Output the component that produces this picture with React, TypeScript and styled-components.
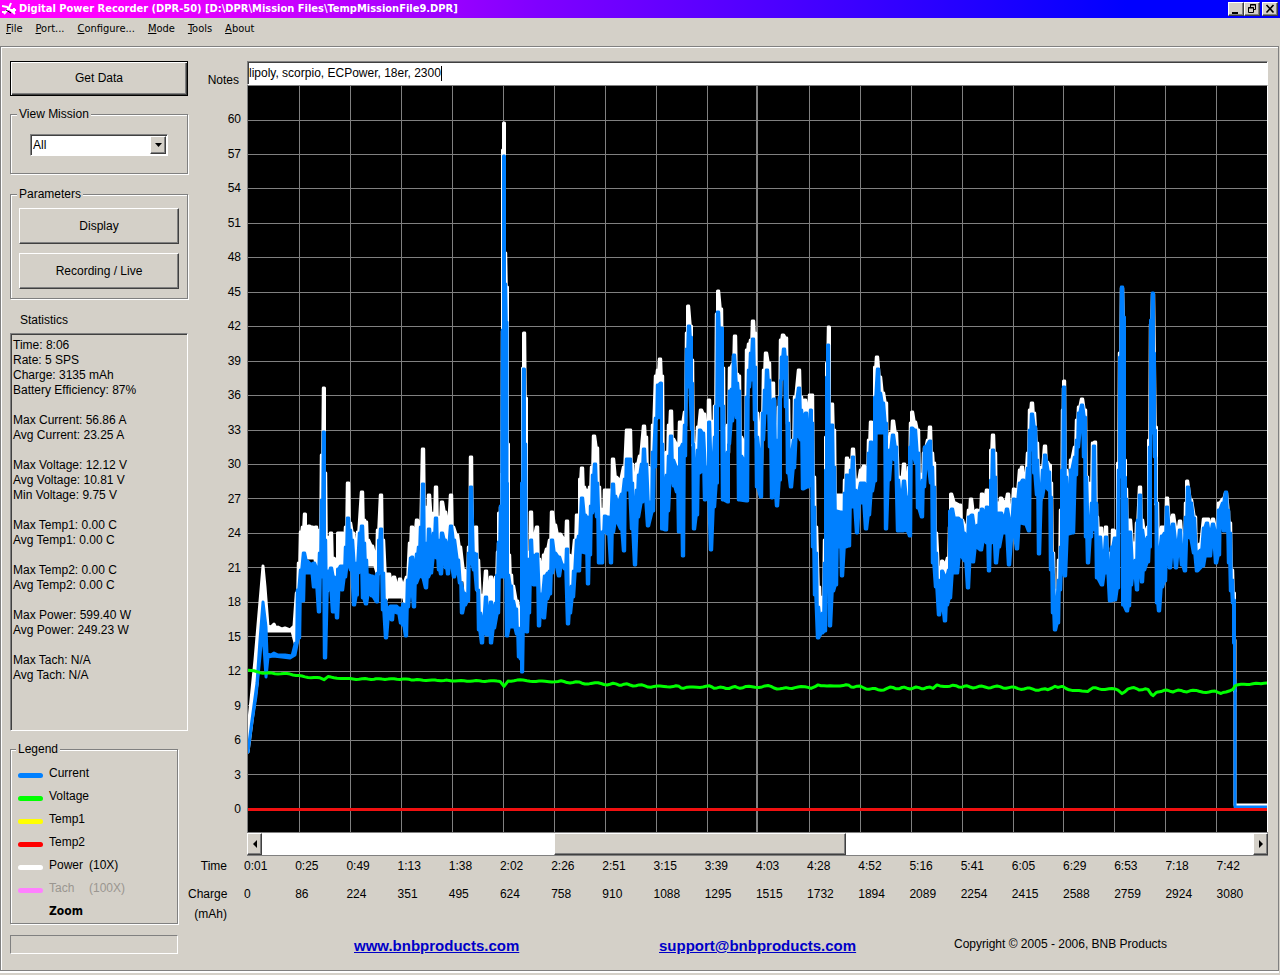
import React from 'react';
import styled, { createGlobalStyle, css } from 'styled-components';

const FACE = '#d4d0c8';
const SHADOW = '#808080';
const DARK = '#404040';
const LIGHT = '#ffffff';
const BLUE = '#0080ff';

const GlobalStyle = createGlobalStyle`
  * { box-sizing: border-box; }
  body {
    margin: 0;
    background: ${FACE};
    color: #000;
    font-family: "Liberation Sans", Arial, sans-serif;
    font-size: 12px;
    line-height: 15px;
  }
  button, input, select { font: inherit; color: inherit; }
`;

const raised = css`
  border: 1px solid;
  border-color: ${LIGHT} ${DARK} ${DARK} ${LIGHT};
  box-shadow: inset -1px -1px 0 ${SHADOW};
  background: ${FACE};
`;

const sunken = css`
  border: 1px solid;
  border-color: ${SHADOW} ${LIGHT} ${LIGHT} ${SHADOW};
  box-shadow: inset 1px 1px 0 ${DARK};
`;

const Window = styled.div`
  display: flex;
  flex-direction: column;
  min-height: 100vh;
  min-width: 900px;
`;

const TitleBar = styled.header`
  display: flex;
  align-items: center;
  height: 18px;
  padding: 0 2px;
  color: #fff;
  background: linear-gradient(90deg, #ff00ff 0%, #ff00ff 8%, #8000ff 42%, #0000ff 88%);
`;

const Title = styled.h1`
  flex: 1;
  margin: 0 0 0 2px;
  font: bold 11px/18px "DejaVu Sans Condensed", "DejaVu Sans", sans-serif;
  white-space: nowrap;
`;

const WindowButton = styled.button<{ $apart?: boolean }>`
  ${raised}
  display: flex;
  width: 16px;
  height: 14px;
  padding: 0;
  margin-left: ${(p) => (p.$apart ? 2 : 0)}px;
`;

const MenuBar = styled.nav`
  display: flex;
  gap: 13px;
  height: 28px;
  padding: 3px 6px;
`;

const MenuItem = styled.button`
  padding: 0;
  border: 0;
  background: none;
  height: 16px;
  font: 11px/16px "DejaVu Sans Condensed", "DejaVu Sans", sans-serif;
  &::first-letter { text-decoration: underline; }
`;

const Panel = styled.main`
  flex: 1;
  display: flex;
  margin: 0 1px 4px 0;
  padding: 14px 10px 0 8px;
  border: 1px solid ${SHADOW};
  box-shadow: inset 1px 1px 0 ${LIGHT}, 0 2px 0 ${LIGHT};
`;

const Sidebar = styled.aside`
  flex: none;
  display: flex;
  flex-direction: column;
  width: 178px;
  margin-left: 1px;
  padding-bottom: 16px;
`;

const PushButton = styled.button`
  ${raised}
  display: block;
  width: 100%;
  height: 36px;
  padding: 0;
`;

const DefaultButton = styled(PushButton)`
  height: 35px;
  border-color: #000;
  box-shadow: inset 1px 1px 0 ${LIGHT}, inset -1px -1px 0 ${DARK}, inset -2px -2px 0 ${SHADOW};
`;

const Group = styled.fieldset`
  min-width: 0;
  margin: 0;
  border: 1px solid ${SHADOW};
  box-shadow: 1px 1px 0 ${LIGHT}, inset 1px 1px 0 ${LIGHT};
`;

const GroupTitle = styled.legend`
  margin-left: -2px;
  padding: 0 2px;
  background: ${FACE};
`;

const MissionGroup = styled(Group)`
  margin-top: 11px;
  padding: 12px 8px 17px;
`;

const ParamGroup = styled(Group)`
  margin-top: 13px;
  padding: 6px 8px 9px;
`;

const ButtonStack = styled.div`
  display: flex;
  flex-direction: column;
  gap: 9px;
`;

const Combo = styled.div`
  ${sunken}
  display: flex;
  width: 138px;
  height: 22px;
  margin-left: 11px;
  padding: 1px;
  background: #fff;
`;

const ComboSelect = styled.select`
  flex: 1;
  appearance: none;
  border: 0;
  padding: 0 0 0 1px;
  background: transparent;
  outline: none;
`;

const ComboArrow = styled.span`
  ${raised}
  display: flex;
  align-items: center;
  justify-content: center;
  width: 16px;
`;

const StatsTitle = styled.h2`
  margin: 14px 0 5px 10px;
  font-size: 12px;
  font-weight: normal;
`;

const Stats = styled.section`
  ${sunken}
  flex: 1;
  padding: 4px 2px;
`;

const StatBlock = styled.p`
  margin: 0 0 15px;
`;

const StatLine = styled.span`
  display: block;
`;

const LegendGroup = styled(Group)`
  width: 168px;
  margin-top: 11px;
  padding: 5px 7px 0;
`;

const LegendList = styled.ul`
  margin: 0;
  padding: 0;
  list-style: none;
`;

const LegendRow = styled.li<{ $muted?: boolean }>`
  display: flex;
  align-items: center;
  height: 23px;
  color: ${(p) => (p.$muted ? '#9a9690' : '#000')};
`;

const Swatch = styled.span<{ $color: string }>`
  width: 25px;
  height: 5px;
  margin: 4px 6px 0 0;
  border-radius: 3px;
  background: ${(p) => p.$color};
`;

const LegendName = styled.span`
  width: 40px;
`;

const ZoomLabel = styled.strong`
  margin-left: 31px;
  font: bold 12px/15px "DejaVu Sans Condensed", "DejaVu Sans", sans-serif;
`;

const StatusBox = styled.output`
  flex: none;
  width: 168px;
  height: 19px;
  margin-top: 11px;
  border: 1px solid;
  border-color: ${SHADOW} ${LIGHT} ${LIGHT} ${SHADOW};
`;

const Content = styled.section`
  flex: 1;
  display: flex;
  flex-direction: column;
  min-width: 0;
`;

const NotesRow = styled.div`
  display: flex;
  height: 24px;
`;

const NotesLabel = styled.label`
  width: 59px;
  padding: 12px 8px 0 0;
  text-align: right;
`;

const NotesBox = styled.div`
  ${sunken}
  flex: 1;
  display: flex;
  align-items: center;
  padding: 0 1px;
  background: #fff;
`;

const NotesInput = styled.input`
  field-sizing: content;
  padding: 0;
  border: 0;
  outline: none;
  background: transparent;
`;

const Caret = styled.span`
  width: 1px;
  height: 15px;
  background: #000;
`;

const ChartRow = styled.div`
  flex: 1;
  display: flex;
  min-height: 500px;
`;

const YAxis = styled.ol`
  display: flex;
  flex-direction: column;
  justify-content: space-between;
  width: 59px;
  margin: 0;
  padding: 27px 6px 15px 0;
  list-style: none;
  text-align: right;
`;

const ChartFrame = styled.div`
  flex: 1;
  display: flex;
  min-width: 0;
  border: 1px solid;
  border-color: ${SHADOW} ${LIGHT} ${SHADOW} ${SHADOW};
  border-bottom: 0;
  background: #000;
`;

const Plot = styled.svg`
  display: block;
  flex: 1;
  width: 100%;
  height: auto;
  min-width: 0;
`;

const ScrollBar = styled.div`
  display: flex;
  height: 24px;
  margin-left: 59px;
  border-top: 1px solid ${SHADOW};
  border-bottom: 1px solid ${SHADOW};
  background: #fff;
`;

const ScrollButton = styled.button`
  ${raised}
  display: flex;
  align-items: center;
  justify-content: center;
  width: 15px;
  padding: 0;
`;

const ScrollTrack = styled.span<{ $share: number }>`
  flex: ${(p) => p.$share};
`;

const ScrollThumb = styled.span`
  ${raised}
  flex: 291;
`;

const AxisTable = styled.table`
  width: 100%;
  table-layout: fixed;
  border-collapse: collapse;
  line-height: 20px;
`;

const AxisHead = styled.th<{ $gap?: boolean }>`
  width: 56px;
  padding: ${(p) => (p.$gap ? 8 : 0)}px 17px 0 0;
  font-weight: normal;
  text-align: right;
`;

const AxisCell = styled.td<{ $gap?: boolean }>`
  padding: ${(p) => (p.$gap ? 8 : 0)}px 0 0;
  vertical-align: top;
`;

const Footer = styled.footer`
  display: grid;
  grid-template-columns: 305fr 295fr 314fr;
  height: 46px;
  padding: 12px 0 0 166px;
  white-space: nowrap;
`;

const FooterLink = styled.a`
  justify-self: start;
  color: #0000c8;
  font-size: 15px;
  font-weight: bold;
  line-height: 20px;
`;

const Copyright = styled.span`
  line-height: 17px;
`;

type Point = [number, number];

const parse = (text: string): Point[] =>
  text
    .trim()
    .split(/\s+/)
    .map((pair) => pair.split(',').map(Number) as Point);

const POWER_TOP = parse(`
248,730 255,660 261,590 263,566 265,587 268,626 271,627 274,624 276,628 278,627 282,629 285,628 290,630 294,626 297,593 299,563 301,532 303,527
305,514 306,527 309,526 312,527 314,533 316,527 318,537 320,530 322,455 324,388 325,473 327,537 329,547 331,533 333,558
337,560 338,533 342,533 344,542 346,527 348,483 350,523 353,533 356,553 358,532 362,492 364,520 366,522 368,540 372,546
376,557 378,530 381,495 383,540 386,574 389,574 392,585 394,577 398,587 400,579 403,585 407,577 410,543 412,527 414,540
417,520 420,527 423,449 425,507 427,520 429,495 432,520 434,513 436,487 438,517 440,520 442,502 445,512 448,525 451,495
453,527 457,535 460,547 464,570 467,575 469,547 471,457 473,540 476,527 478,560 481,597 483,595 486,571 488,595 491,577
493,585 496,577 498,552 499,513 501,513 502,473 503,150 504,123 505,253 507,287 508,444 509,555 511,575 513,586 517,601
521,620 522,578 523,368 524,333 526,398 527,552 529,563 531,512 533,540 537,527 539,559 542,571 544,555 547,549 550,540
552,512 555,525 558,534 560,534 565,540 567,521 569,555 572,557 575,540 577,515 579,515 580,479 582,468 584,487 586,490
588,517 590,487 592,467 594,436 597,448 599,487 601,509 603,517 605,490 609,490 611,502 613,459 616,477 620,480 624,467
627,430 630,430 632,464 635,494 637,464 640,456 644,426 646,437 648,467 651,479 653,425 656,376 658,370 660,359 662,376
664,464 667,452 669,425 671,411 673,439 678,446 680,422 682,423 685,412 687,333 688,306 691,326 692,360 694,444 695,464
698,427 701,410 704,414 707,444 709,400 711,421 713,452 715,406 717,314 718,291 721,309 723,368 725,450 728,425 730,368
733,364 735,336 737,374 739,376 741,437 745,444 747,350 749,344 751,340 753,321 755,333 757,413 760,447 762,413 764,370
766,353 769,363 771,397 773,383 775,427 777,447 779,407 781,340 783,335 786,338 788,400 790,443 793,440 795,397 799,370
801,397 803,404 805,400 808,413 810,395 812,395 814,477 816,527 819,587 821,608 823,597 825,540 826,437 827,363 829,327
830,413 832,404 834,430 836,495 841,495 843,520 845,480 847,458 849,473 851,460 853,449 856,480 858,480 861,470 864,466
867,473 869,440 871,422 874,440 875,367 877,357 880,377 883,393 886,403 888,457 891,433 893,421 896,433 899,477 901,483
904,464 908,490 909,467 911,423 912,412 915,422 918,430 920,474 922,477 924,453 928,440 930,427 932,453 934,463 936,533
939,567 941,577 942,561 945,564 948,558 950,527 951,494 955,503 960,505 962,520 966,529 969,510 971,499 974,513 977,510
980,511 982,494 984,500 987,490 990,503 991,450 993,435 995,453 997,510 999,503 1001,498 1005,503 1008,494 1011,517
1014,489 1017,490 1020,470 1022,467 1025,483 1028,453 1030,410 1032,403 1034,413 1037,443 1040,493 1042,467 1045,446
1047,462 1050,465 1051,483 1053,553 1055,590 1057,593 1059,560 1061,510 1063,410 1064,381 1066,470 1069,490 1071,460
1075,447 1077,420 1079,407 1082,399 1085,410 1087,477 1089,523 1091,483 1093,443 1095,442 1097,517 1099,529 1101,528
1103,553 1106,527 1108,553 1111,560 1113,530 1117,532 1118,463 1120,353 1122,289 1124,320 1125,460 1126,489 1128,530
1130,520 1133,543 1135,543 1137,523 1140,487 1142,520 1145,533 1148,527 1149,440 1151,324 1153,294 1156,427 1157,503
1159,543 1162,527 1165,527 1167,498 1170,523 1173,515 1177,532 1180,521 1184,557 1186,503 1187,481 1191,500 1195,517
1197,548 1200,544 1204,519 1208,519 1210,527 1213,519 1217,533 1219,503 1223,499 1226,493 1230,523 1232,570 1234,593
1235,640 1235,690`);

const CURRENT_TOP = parse(`
248,751 252,720 257,683 260,640 263,602 266,627 267,654 271,655 274,653 278,655 285,655 292,656 296,643 298,590 301,570 304,553 307,561 311,564
314,563 318,570 320,553 322,500 324,432 325,540 327,590 329,571 331,568 334,577 337,587 338,569 341,566 344,566 346,547 348,518
350,530 352,540 355,565 357,563 360,533 362,526 364,543 366,560 368,575 372,576 374,578 378,573 379,540 381,529 383,573
385,600 388,609 391,606 396,606 399,608 402,608 403,604 406,605 408,580 411,558 412,557 415,567 417,554 419,547 421,527
423,484 425,543 427,547 429,529 432,548 434,533 436,518 438,540 440,543 442,533 445,540 448,547 451,526 454,540 458,560
461,583 464,593 467,597 469,553 471,487 474,553 476,554 478,590 480,613 483,623 486,597 488,617 491,602 493,610 496,603
497,575 499,542 501,506 503,330 504,156 505,284 507,322 507,483 508,575 511,586 513,601 516,609 518,628 521,636 522,483
524,369 525,444 527,559 528,594 530,559 531,540 533,555 535,565 537,554 540,594 542,594 545,576 548,573 550,571 552,540
555,553 559,557 563,565 565,567 567,549 569,597 572,586 574,571 577,540 579,536 582,498 585,515 587,517 589,548 591,506
593,475 595,464 597,483 600,532 603,532 605,516 608,517 610,525 613,484 615,496 618,502 622,494 625,479 627,459 630,459
632,483 634,517 637,490 639,475 642,464 644,449 646,464 649,502 651,502 653,452 656,418 658,385 661,383 662,444 664,494
667,475 669,456 671,436 673,460 677,467 679,483 680,448 683,444 685,425 687,349 689,326 691,337 692,383 693,444 695,483
698,450 700,430 703,433 706,467 708,467 709,422 712,473 715,437 716,406 718,312 720,328 722,328 723,406 725,467 728,452
730,391 732,389 734,355 737,383 739,391 741,456 745,461 747,397 749,370 751,353 753,339 755,367 757,437 761,463 763,413
765,390 767,370 769,380 771,407 774,399 776,440 778,453 780,397 782,357 784,349 786,357 788,423 790,460 794,440 796,400
799,388 801,410 803,417 806,413 808,440 811,410 812,423 814,507 816,553 818,607 821,622 823,613 825,563 826,470 827,377
828,345 830,440 832,425 834,467 836,511 841,512 843,537 845,493 847,475 849,493 851,470 853,457 855,490 858,492 861,483
864,483 867,490 869,453 871,442 874,463 875,397 878,369 880,393 883,403 886,423 887,477 890,450 893,435 896,447 898,480
901,498 904,481 907,497 909,510 910,447 912,428 915,430 918,453 920,493 923,480 925,447 930,441 932,467 934,487 936,553
938,580 941,597 942,571 946,577 949,570 950,511 952,509 955,518 958,518 961,520 964,533 967,540 969,517 972,515 975,527
978,525 980,513 982,509 985,513 987,507 990,513 991,480 993,450 995,477 997,520 999,513 1001,513 1004,518 1007,509
1011,525 1014,499 1017,500 1020,483 1023,480 1025,497 1028,468 1030,430 1032,414 1035,427 1037,460 1040,500 1043,470
1045,455 1049,472 1051,497 1052,553 1055,597 1056,605 1059,580 1061,547 1062,470 1064,387 1066,477 1069,507 1071,470
1075,457 1077,440 1079,413 1082,405 1085,417 1086,477 1089,537 1092,503 1094,446 1096,503 1098,543 1100,537 1103,563
1106,537 1110,580 1112,547 1115,538 1117,542 1119,470 1120,357 1122,287 1124,317 1125,477 1126,499 1128,537 1130,532
1133,563 1136,560 1138,520 1140,495 1142,530 1145,542 1148,537 1150,447 1151,320 1153,293 1154,353 1155,430 1156,503
1158,560 1162,536 1165,533 1167,507 1170,533 1173,524 1177,547 1180,530 1183,563 1186,517 1188,487 1191,503 1194,518
1197,553 1201,550 1204,528 1207,523 1210,533 1213,524 1217,537 1219,510 1223,503 1226,492 1228,510 1230,533 1232,580
1234,600 1235,690`);

const CURRENT_BOTTOM = parse(`
248,752 252,722 256,696 260,656 262,633 264,647 266,677 268,657 273,656 282,657 290,658 295,655 299,638 301,598 303,601 305,573
309,573 311,570 314,587 316,586 319,612 321,577 323,570 325,658 328,590 330,587 333,612 335,605 337,618 340,580 342,590
345,577 348,563 351,570 354,605 357,595 358,573 361,570 363,598 366,604 369,593 372,596 377,602 379,573 381,573 383,610
386,638 389,617 392,620 394,612 398,613 401,623 403,625 406,636 408,607 411,587 414,607 416,583 420,576 422,577 426,588
428,577 431,573 434,557 437,558 439,570 441,574 444,547 446,568 448,574 450,560 454,577 457,570 460,583 462,613 465,605
468,601 470,557 474,570 477,590 479,630 482,643 484,630 487,635 489,613 491,643 494,628 498,613 500,577 503,577 505,577
507,636 510,627 514,627 517,634 519,657 521,659 522,672 524,631 527,632 529,613 531,582 534,585 537,585 539,626 541,613
544,618 547,599 550,594 552,573 555,563 559,576 562,565 565,569 568,624 570,613 573,597 576,571 579,571 581,552 586,553
588,584 590,555 592,513 595,506 597,517 599,563 602,563 604,531 608,534 611,563 613,532 616,521 621,529 624,551 626,490
629,490 632,529 635,565 638,517 642,502 645,500 648,526 653,511 655,467 657,418 659,402 661,418 662,529 666,530 668,511
671,475 674,486 677,492 679,532 681,502 683,556 685,456 687,387 689,381 692,429 694,529 697,515 699,473 703,471 705,500
708,496 711,550 714,507 717,483 718,368 720,345 721,406 723,500 728,502 729,444 732,421 735,404 737,418 739,500 747,501
749,387 751,380 753,373 755,420 757,487 761,497 763,440 766,407 768,413 770,447 772,498 774,480 777,506 780,480 781,380
784,370 786,407 788,473 791,487 794,468 797,433 801,440 803,489 808,487 811,480 813,547 815,595 818,638 822,633 825,631
827,547 828,563 830,626 833,591 836,585 838,543 840,547 842,576 845,547 849,546 851,507 854,507 857,533 860,503 863,503
866,529 869,515 872,491 875,481 877,423 879,433 884,433 886,529 889,480 892,457 895,460 898,531 903,531 905,503 907,531
910,536 912,453 916,463 918,508 922,517 924,487 927,460 931,483 933,563 936,587 939,615 942,605 945,621 947,605 950,598
953,573 957,573 960,555 965,561 968,588 971,553 973,562 976,547 981,550 984,540 987,543 989,571 991,543 993,527 996,563
999,547 1003,533 1006,533 1009,565 1013,530 1017,549 1020,523 1025,524 1029,531 1031,450 1033,440 1034,473 1037,495
1039,554 1042,497 1045,487 1049,490 1051,570 1053,613 1055,630 1058,623 1060,590 1063,543 1065,576 1068,534 1073,533
1076,475 1078,447 1082,417 1084,457 1086,537 1088,563 1091,537 1093,510 1095,530 1097,578 1102,585 1105,573 1107,570
1110,601 1115,600 1118,588 1120,470 1122,477 1123,605 1127,611 1129,606 1131,585 1134,570 1137,590 1139,563 1142,582
1144,570 1148,562 1150,547 1151,433 1153,430 1155,457 1157,603 1159,611 1162,587 1165,581 1167,553 1170,568 1173,547
1176,568 1179,547 1182,565 1185,571 1188,517 1190,538 1194,553 1197,571 1203,566 1206,556 1210,556 1213,537 1216,563
1219,555 1221,513 1224,531 1227,531 1229,563 1231,591 1233,603 1234,643 1235,690`);

const VOLTAGE = parse(`
248,670 263,673 290,674 305,677 320,678 324,680 328,677 350,679 400,679 420,680 470,681 500,681 504,686 508,681 523,680
527,681 570,682 582,683 607,684 633,685 657,687 670,686 690,688 703,686 720,688 749,687 765,686 783,689 795,687 811,688
818,684 827,687 840,685 860,687 878,690 890,688 913,688 933,688 937,685 950,686 973,687 1000,687 1030,689 1048,690
1055,686 1066,688 1082,692 1096,688 1118,690 1122,694 1128,688 1148,690 1153,696 1158,691 1190,691 1215,692 1226,693
1233,690 1235,685 1250,684 1267,683`);

// Stretches where the power trace rides clear above the current trace.
const CLEAR: [number, number, number][] = [
  [267, 294, 631],
  [307, 317, 558],
  [368, 376, 565],
  [386, 404, 597],
  [461, 466, 580],
];

const POWER_BOTTOM: Point[] = CURRENT_TOP.map(([x, y]) => {
  const gap = CLEAR.find(([from, to]) => x >= from && x <= to);
  return [x, gap ? gap[2] : y + 1];
});

// After the opening ramp, samples are held briefly so the band edges climb in steep steps.
const hold = (points: Point[]): Point[] =>
  points.flatMap(([x, y], i): Point[] => {
    if (x < 296) return [[x, y]];
    const prev = points[i - 1] ?? [x, y];
    const next = points[i + 1] ?? [x, y];
    const left = x - Math.min(0.7, (x - prev[0]) / 2);
    const right = x + Math.min(0.7, (next[0] - x) / 2);
    return [[left, y], [right, y]];
  });

const toPath = (points: Point[]) => points.map(([x, y]) => `${x},${y}`).join(' ');
const toBand = (top: Point[], bottom: Point[]) =>
  `${toPath(hold(top))} ${toPath(hold(bottom).reverse())}`;

const ripple = (points: Point[]): Point[] =>
  points.slice(1).flatMap(([x1, y1], i) => {
    const [x0, y0] = points[i];
    const steps = Math.max(1, Math.round((x1 - x0) / 3));
    return Array.from({ length: steps }, (_, k): Point => {
      const x = x0 + ((x1 - x0) * k) / steps;
      const y = y0 + ((y1 - y0) * k) / steps;
      const swing = x < 560 || x > 1236 ? 0.4 : 1;
      return [Math.round(x), Math.round((y + swing * Math.sin(x * 1.7)) * 10) / 10];
    }).concat(i === points.length - 2 ? [[x1, y1]] : []);
  });

const Y_LABELS = Array.from({ length: 21 }, (_, i) => 60 - i * 3);
const GRID_Y = Y_LABELS.map((v) => Math.round(808.4 - v * 11.48) + 0.5);
const GRID_X = Array.from({ length: 19 }, (_, i) =>
  i === 9 ? 757 : Math.floor(299 + i * 50.98 + 0.3) + 0.5,
);

const TIMES = ['0:01', '0:25', '0:49', '1:13', '1:38', '2:02', '2:26', '2:51', '3:15', '3:39', '4:03', '4:28', '4:52', '5:16', '5:41', '6:05', '6:29', '6:53', '7:18', '7:42'];
const CHARGES = [0, 86, 224, 351, 495, 624, 758, 910, 1088, 1295, 1515, 1732, 1894, 2089, 2254, 2415, 2588, 2759, 2924, 3080];

const STATS = [
  ['Time: 8:06', 'Rate: 5 SPS', 'Charge: 3135 mAh', 'Battery Efficiency: 87%'],
  ['Max Current: 56.86 A', 'Avg Current: 23.25 A'],
  ['Max Voltage: 12.12 V', 'Avg Voltage: 10.81 V', 'Min Voltage: 9.75 V'],
  ['Max Temp1: 0.00 C', 'Avg Temp1: 0.00 C'],
  ['Max Temp2: 0.00 C', 'Avg Temp2: 0.00 C'],
  ['Max Power: 599.40 W', 'Avg Power: 249.23 W'],
  ['Max Tach: N/A', 'Avg Tach: N/A'],
];

const SERIES = [
  { name: 'Current', color: BLUE },
  { name: 'Voltage', color: '#00ff00' },
  { name: 'Temp1', color: '#ffff00' },
  { name: 'Temp2', color: '#ff0000' },
  { name: 'Power', scale: '(10X)', color: '#ffffff' },
  { name: 'Tach', scale: '(100X)', color: '#ff80ff', muted: true },
];

const MENUS = ['File', 'Port...', 'Configure...', 'Mode', 'Tools', 'About'];

function Chart() {
  return (
    <Plot viewBox="248 86 1019 746" preserveAspectRatio="none" role="img" aria-label="Mission recording">
      <g stroke="#808080" strokeWidth="1">
        {GRID_Y.map((y) => <line key={y} x1="248" x2="1267" y1={y} y2={y} />)}
        {GRID_X.map((x, i) => <line key={x} x1={x} x2={x} y1="86" y2="832" strokeWidth={i === 9 ? 2 : 1} />)}
      </g>
      <g strokeWidth="3" strokeLinejoin="round" strokeLinecap="round">
        <polygon points={toBand(POWER_TOP, POWER_BOTTOM)} fill="#fff" stroke="#fff" />
        <polyline points="1235,690 1235,805 1267,805" fill="none" stroke="#fff" />
        <polygon points={toBand(CURRENT_TOP, CURRENT_BOTTOM)} fill={BLUE} stroke={BLUE} />
        <polyline points="1235,680 1235,807 1267,807" fill="none" stroke={BLUE} />
        <polyline points={toPath(ripple(VOLTAGE))} fill="none" stroke="#00ff00" />
      </g>
      <line x1="248" x2="1267" y1="809.5" y2="809.5" stroke="#f01010" strokeWidth="3" />
    </Plot>
  );
}

export default function App() {
  return (
    <Window>
      <GlobalStyle />
      <TitleBar>
        <svg width="15" height="14" viewBox="0 0 15 14" fill="none" stroke="#fff" strokeWidth="2" aria-hidden="true">
          <path d="M0 4 L5 5 L13 12 M9 1 L7 6 L2 12 M0 10 H5 M9 8 L14 8 M12 6 V12" />
          <path d="M4 8 L9 11" stroke="#000" strokeWidth="1" />
        </svg>
        <Title>Digital Power Recorder (DPR-50) [D:\DPR\Mission Files\TempMissionFile9.DPR]</Title>
        <WindowButton aria-label="Minimize">
          <svg width="14" height="12" viewBox="0 0 14 12"><path d="M3 9h6v2H3z" /></svg>
        </WindowButton>
        <WindowButton aria-label="Restore">
          <svg width="14" height="12" viewBox="0 0 14 12" fill="none" stroke="#000">
            <path d="M5.500 4V1.500h5v5H9M5 2h6M3.500 4.500h5v5h-5zM3 5h6" />
          </svg>
        </WindowButton>
        <WindowButton aria-label="Close" $apart>
          <svg width="14" height="12" viewBox="0 0 14 12"><path d="M3.500 2l7 7.500M10.500 2l-7 7.500" stroke="#000" strokeWidth="1.600" /></svg>
        </WindowButton>
      </TitleBar>
      <MenuBar>
        {MENUS.map((name) => <MenuItem key={name}>{name}</MenuItem>)}
      </MenuBar>
      <Panel>
        <Sidebar>
          <DefaultButton>Get Data</DefaultButton>
          <MissionGroup>
            <GroupTitle>View Mission</GroupTitle>
            <Combo>
              <ComboSelect aria-label="View Mission" defaultValue="All"><option>All</option></ComboSelect>
              <ComboArrow aria-hidden="true">
                <svg width="7" height="4" viewBox="0 0 7 4"><path d="M0 0h7L3.500 4z" /></svg>
              </ComboArrow>
            </Combo>
          </MissionGroup>
          <ParamGroup>
            <GroupTitle>Parameters</GroupTitle>
            <ButtonStack>
              <PushButton>Display</PushButton>
              <PushButton>Recording / Live</PushButton>
            </ButtonStack>
          </ParamGroup>
          <StatsTitle>Statistics</StatsTitle>
          <Stats>
            {STATS.map((block) => (
              <StatBlock key={block[0]}>
                {block.map((line) => <StatLine key={line}>{line}</StatLine>)}
              </StatBlock>
            ))}
          </Stats>
          <LegendGroup>
            <GroupTitle>Legend</GroupTitle>
            <LegendList>
              {SERIES.map((s) => (
                <LegendRow key={s.name} $muted={s.muted}>
                  <Swatch $color={s.color} />
                  <LegendName>{s.name}</LegendName>
                  {s.scale}
                </LegendRow>
              ))}
              <LegendRow><ZoomLabel>Zoom</ZoomLabel></LegendRow>
            </LegendList>
          </LegendGroup>
          <StatusBox />
        </Sidebar>
        <Content>
          <NotesRow>
            <NotesLabel htmlFor="notes">Notes</NotesLabel>
            <NotesBox>
              <NotesInput id="notes" defaultValue="lipoly, scorpio, ECPower, 18er, 2300" />
              <Caret />
            </NotesBox>
          </NotesRow>
          <ChartRow>
            <YAxis>{Y_LABELS.map((v) => <li key={v}>{v}</li>)}</YAxis>
            <ChartFrame><Chart /></ChartFrame>
          </ChartRow>
          <ScrollBar>
            <ScrollButton aria-label="Scroll left">
              <svg width="4" height="8" viewBox="0 0 4 8"><path d="M4 0v8L0 4z" /></svg>
            </ScrollButton>
            <ScrollTrack $share={292} />
            <ScrollThumb />
            <ScrollTrack $share={407} />
            <ScrollButton aria-label="Scroll right">
              <svg width="4" height="8" viewBox="0 0 4 8"><path d="M0 0v8l4-4z" /></svg>
            </ScrollButton>
          </ScrollBar>
          <AxisTable>
            <tbody>
              <tr>
                <AxisHead scope="row">Time</AxisHead>
                {TIMES.map((t) => <AxisCell key={t}>{t}</AxisCell>)}
              </tr>
              <tr>
                <AxisHead scope="row" $gap>Charge (mAh)</AxisHead>
                {CHARGES.map((c) => <AxisCell key={c} $gap>{c}</AxisCell>)}
              </tr>
            </tbody>
          </AxisTable>
          <Footer>
            <FooterLink href="#site">www.bnbproducts.com</FooterLink>
            <FooterLink href="#support">support@bnbproducts.com</FooterLink>
            <Copyright>Copyright © 2005 - 2006, BNB Products</Copyright>
          </Footer>
        </Content>
      </Panel>
    </Window>
  );
}
